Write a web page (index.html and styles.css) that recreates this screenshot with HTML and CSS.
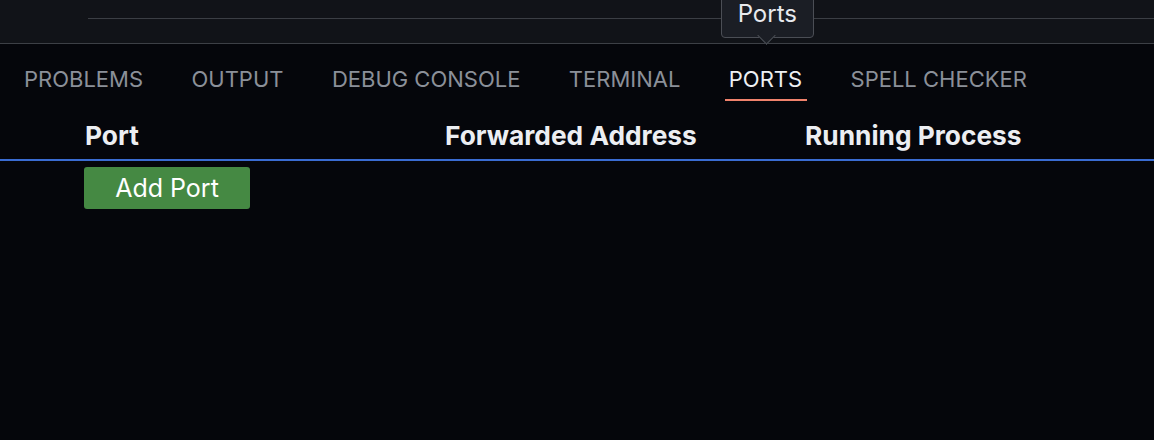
FILE: index.html
```html
<!DOCTYPE html>
<html>
<head>
<meta charset="utf-8">
<link rel="stylesheet" href="styles.css">
</head>
<body>
<div class="top">
  <div class="topline"></div>
</div>
<div class="panel">
  <div class="tabs">
    <div class="tab">PROBLEMS</div>
    <div class="tab">OUTPUT</div>
    <div class="tab">DEBUG CONSOLE</div>
    <div class="tab">TERMINAL</div>
    <div class="tab active">PORTS
      <div class="tooltip">Ports</div>
    </div>
    <div class="tab">SPELL CHECKER</div>
  </div>
  <div class="thead">
    <div class="th">Port</div>
    <div class="th">Forwarded Address</div>
    <div class="th">Running Process</div>
  </div>
  <div class="rows">
    <button class="add">Add Port</button>
  </div>
</div>
</body>
</html>
```
FILE: styles.css
```css
html, body {
  margin: 0;
  padding: 0;
  background: #05060b;
  font-family: Inter, "Noto Sans", sans-serif;
  overflow: hidden;
}
.top {
  background: #111318;
  border-bottom: 1px solid #3d4046;
  padding-top: 18px;
  height: 25px;
}
.topline {
  margin-left: 88px;
  height: 1px;
  background: #3b3e44;
}
.panel {
  background: #05060b;
}
.tabs {
  display: flex;
  gap: 48.4px;
  padding-left: 24px;
  height: 57px;
  align-items: flex-start;
  padding-top: 22px;
  box-sizing: border-box;
}
.tab {
  position: relative;
  color: #8b9099;
  font-size: 22px;
  line-height: 26px;
}
.tab.active {
  color: #eef0f3;
}
.tab.active::after {
  content: "";
  position: absolute;
  left: -4px;
  right: -5px;
  top: 33px;
  height: 2px;
  background: #f0826c;
}
.tooltip {
  position: absolute;
  left: -8px;
  top: -71px;
  width: 93px;
  height: 43px;
  box-sizing: border-box;
  padding-top: 3px;
  background: #1b1e25;
  border: 1px solid #4b4e55;
  border-radius: 4px;
  color: #e8eaee;
  font-size: 24px;
  line-height: 30px;
  text-align: center;
}
.tooltip::after {
  content: "";
  position: absolute;
  left: 38px;
  top: 33px;
  width: 12px;
  height: 12px;
  background: #1b1e25;
  border-right: 1px solid #4b4e55;
  border-bottom: 1px solid #4b4e55;
  transform: rotate(45deg);
}
.thead {
  display: grid;
  grid-template-columns: 360px 360px 1fr;
  padding-left: 85px;
  padding-top: 20px;
  height: 60px;
  border-bottom: 2px solid #3a6cd2;
  box-sizing: border-box;
}
.th {
  color: #eceef2;
  font-weight: 700;
  font-size: 26.3px;
  line-height: 30px;
}
.rows {
  padding-left: 84px;
  padding-top: 6px;
}
.add {
  display: block;
  width: 166px;
  height: 42px;
  background: #458943;
  border: none;
  border-radius: 3px;
  color: #ffffff;
  font-family: Inter, "Noto Sans", sans-serif;
  font-size: 25px;
  padding: 0;
}
```
